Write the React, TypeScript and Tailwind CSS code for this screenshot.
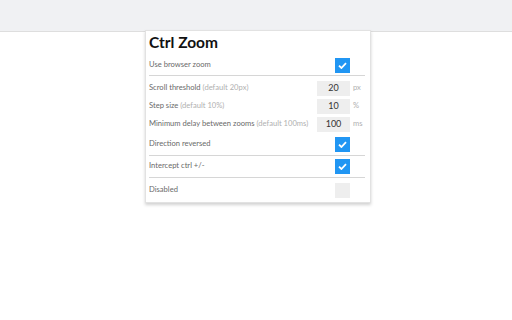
import React from 'react';

const Check: React.FC<{ on?: boolean }> = ({ on }) => (
  <div className={`w-[15px] h-[15px] flex items-center justify-center ${on ? 'bg-[#2196f3]' : 'bg-[#eeeeee]'}`}>
    {on && (
      <svg width="9" height="7" viewBox="0 0 9 7">
        <path d="M1 3.6 L3.4 6 L8 1.2" stroke="white" strokeWidth="1.8" fill="none" />
      </svg>
    )}
  </div>
);

const Row: React.FC<{ label: string; hint?: string; children: React.ReactNode; unit?: string; className?: string }> = ({
  label,
  hint,
  children,
  unit,
  className = '',
}) => (
  <div className={`flex items-center h-[18px] ${className}`}>
    <div className="flex-1 whitespace-nowrap text-[7.6px] text-[#6a6a6a]">
      {label} {hint && <span className="text-[#b0b0b0]">{hint}</span>}
    </div>
    <div className="w-[34px] flex justify-end">{children}</div>
    <div className="w-[15px] pl-[3px] text-[7.6px] text-[#b0b0b0]">{unit}</div>
  </div>
);

const NumBox: React.FC<{ value: string }> = ({ value }) => (
  <div className="w-[33px] h-[15px] bg-[#eeeeee] flex items-center justify-center text-[9px] text-[#333]">{value}</div>
);

const Divider: React.FC<{ className?: string }> = ({ className = '' }) => (
  <div className={`h-px bg-[#d6d6d6] ${className}`} />
);

export default function App() {
  return (
    <div className="w-[512px] h-[320px] bg-white font-['Lato',sans-serif]">
      <div className="h-[32px] bg-[#f0f1f3] border-b border-[#dedede]" />
      <div className="w-[226px] ml-[145px] -mt-[2px] bg-white border border-[#e2e2e2] shadow-[0_2px_3px_rgba(0,0,0,0.18)] pl-[3px] pr-[5px] pb-[3px]">
        <div className="h-[24px] text-[15.5px] font-bold text-[#111] leading-[20px] pt-[1px]">Ctrl Zoom</div>
        <Row label="Use browser zoom" className="mt-px">
          <Check on />
        </Row>
        <Divider className="mt-px" />
        <Row label="Scroll threshold" hint="(default 20px)" unit="px" className="mt-[3px]">
          <NumBox value="20" />
        </Row>
        <Row label="Step size" hint="(default 10%)" unit="%">
          <NumBox value="10" />
        </Row>
        <Row label="Minimum delay between zooms" hint="(default 100ms)" unit="ms">
          <NumBox value="100" />
        </Row>
        <Row label="Direction reversed" className="mt-[2px]">
          <Check on />
        </Row>
        <Divider className="mt-[2px]" />
        <Row label="Intercept ctrl +/-" className="mt-px">
          <Check on />
        </Row>
        <Divider className="mt-[2px]" />
        <Row label="Disabled" className="mt-[3px]">
          <Check />
        </Row>
      </div>
    </div>
  );
}
